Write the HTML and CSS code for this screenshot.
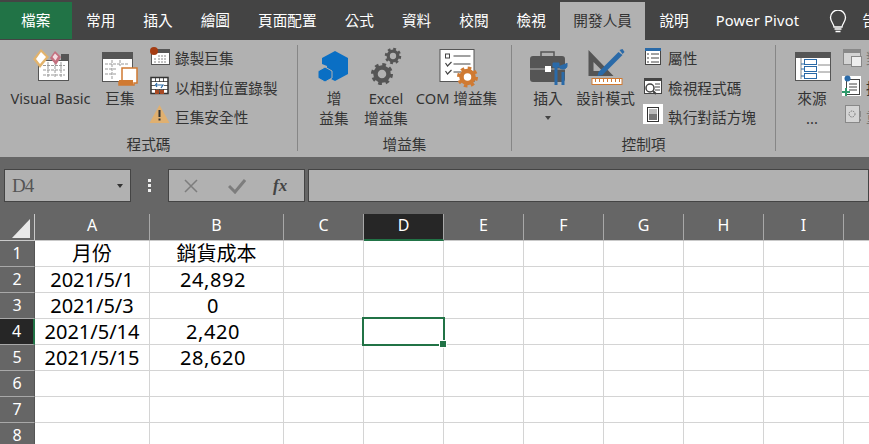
FILE: index.html
```html
<!DOCTYPE html>
<html lang="zh-Hant">
<head>
<meta charset="utf-8">
<title>Excel</title>
<link rel="stylesheet" href="styles.css">
</head>
<body>
<div class="app">
  <nav class="tabs">
    <div class="tab file">檔案</div>
    <div class="tab">常用</div>
    <div class="tab">插入</div>
    <div class="tab">繪圖</div>
    <div class="tab">頁面配置</div>
    <div class="tab">公式</div>
    <div class="tab">資料</div>
    <div class="tab">校閱</div>
    <div class="tab">檢視</div>
    <div class="tab active">開發人員</div>
    <div class="tab">說明</div>
    <div class="tab latin">Power Pivot</div>
    <svg class="bulb" viewBox="831 10 18 23" width="18" height="23"><path d="M836 27c0-3-3.500-5-3.500-9.500a7.500 7.500 0 0 1 15 0c0 4.500-3.500 6.500-3.500 9.500z" fill="none" stroke="#fff" stroke-width="1.300"/><path d="M836.500 29h7M837.500 31.500h5" stroke="#fff" stroke-width="1.300"/></svg>
    <div class="tell">告</div>
  </nav>

  <section class="ribbon">
    <div class="group g1">
      <div class="items">
        <div class="big w-vb">
          <svg class="ico" viewBox="10 42 81 46" width="81" height="46">
            <rect x="38.500" y="60.500" width="30" height="20" fill="#fff" stroke="#555"/><rect x="61" y="54" width="8" height="7" fill="#555"/>
            <path d="M43 65.500h22M43 70h22M43 75h22M48 62v16M55 62v16M61 62v16" stroke="#999" stroke-dasharray="3 1"/>
            <path d="M41 49l8 8-9 11-7-9z" fill="#e2b36c"/><path d="M41 52l5 5-6 7-4-5z" fill="#fff"/>
            <path d="M55 51l6 6-5 8-6-7z" fill="#c4707f"/><path d="M55 53.500l3 3-2.500 4-3-3.500z" fill="#f4dde2"/>
          </svg>
          <span>Visual Basic</span>
        </div>
        <div class="big w-macro">
          <svg class="ico" viewBox="100 42 40 46" width="40" height="46">
            <rect x="102.500" y="52.500" width="30" height="29" fill="#fff" stroke="#555"/><rect x="102" y="52" width="31" height="7" fill="#555"/>
            <path d="M105 64h24M105 69h12M105 74h12M112 60v19M120 60v6" stroke="#999" stroke-dasharray="3 1"/>
            <path d="M122 68h15v15h-3v2h-15v-3h3z" fill="#fff" stroke="#d07a32" stroke-width="1.500"/><rect x="119" y="80" width="14" height="5" fill="#d07a32"/>
          </svg>
          <span>巨集</span>
        </div>
        <div class="smalls s1">
          <div class="small">
            <svg class="ico" viewBox="150 47 20 20" width="20" height="20"><rect x="151.500" y="50.500" width="18" height="14" fill="#fff" stroke="#555"/><rect x="151" y="49" width="19" height="4" fill="#555"/><path d="M158 56h9M158 59h9M158 62h9M154 59h3M154 62h3" stroke="#888" stroke-dasharray="2 1"/><circle cx="154" cy="51" r="4" fill="#a53c12"/></svg>
            <span>錄製巨集</span>
          </div>
          <div class="small">
            <svg class="ico" viewBox="150 77 20 20" width="20" height="20"><rect x="151" y="77.500" width="17" height="16" fill="#fff" stroke="#333" stroke-width="1.500"/><path d="M151 81.500h17M151 85.500h17M151 89.500h17M155.500 78v16M159.500 78v16M163.500 78v16" stroke="#333" stroke-width=".8"/><rect x="155" y="82" width="9" height="7" fill="#fff"/><path d="M156 85h7l-2 3M157 83l-1.500 2 1.500 2" fill="none" stroke="#2a6aa8" stroke-width="1.200"/><rect x="155" y="90" width="4" height="4" fill="#a84a24"/><rect x="160" y="90" width="4" height="4" fill="#a84a24"/></svg>
            <span>以相對位置錄製</span>
          </div>
          <div class="small low">
            <svg class="ico" viewBox="150 107 20 20" width="20" height="20"><path d="M159.500 106l10 18h-20z" fill="#e0b070"/><path d="M158.500 111h2v7h-2zM158.500 119.500h2v2h-2z" fill="#333"/></svg>
            <span>巨集安全性</span>
          </div>
        </div>
      </div>
      <div class="glabel">程式碼</div>
    </div>
    <div class="sep"></div>

    <div class="group g2">
      <div class="items">
        <div class="big w-addin">
          <svg class="ico" viewBox="314 42 40 46" width="40" height="46"><path d="M335 51l13 7v16l-13 7-8-4V66l-5-2v-6z" fill="#0a6fc4"/><path d="M325 67l7 4v7l-7 4-7-4v-7z" fill="#0a6fc4" stroke="#b1b1b1"/></svg>
          <span>增<br>益集</span>
        </div>
        <div class="big w-excel">
          <svg class="ico" viewBox="366 42 40 46" width="40" height="46"><g fill="none" stroke="#555"><circle cx="382" cy="74" r="9.500" stroke-width="3" stroke-dasharray="3.700 3.760"/><circle cx="382" cy="74" r="6.500" stroke-width="4.500"/><circle cx="393" cy="56" r="7" stroke-width="2.500" stroke-dasharray="2.750 2.750"/><circle cx="393" cy="56" r="4.800" stroke-width="3.300"/></g></svg>
          <span>Excel<br>增益集</span>
        </div>
        <div class="big w-com">
          <svg class="ico" viewBox="436.500 42 40 46" width="40" height="46"><rect x="439.500" y="49.500" width="34" height="32" fill="#fff" stroke="#555"/><rect x="445" y="54" width="4" height="4" fill="none" stroke="#444"/><path d="M453 56h17M453 64h17M453 72h8M445 63l2 3 4-4M445 71l2 3 4-4" fill="none" stroke="#444" stroke-width="1.200"/><g fill="none" stroke="#d07a32"><circle cx="467" cy="77" r="9" stroke-width="3" stroke-dasharray="3.530 3.530"/><circle cx="467" cy="77" r="6" stroke-width="4.500"/></g></svg>
          <span>COM 增益集</span>
        </div>
      </div>
      <div class="glabel">增益集</div>
    </div>
    <div class="sep"></div>

    <div class="group g3">
      <div class="items">
        <div class="big w-insert">
          <svg class="ico" viewBox="528 42 40 46" width="40" height="46"><path d="M541 56v-4h13v4" fill="none" stroke="#555" stroke-width="1.500"/><rect x="530" y="56" width="35" height="26" rx="3" fill="#555"/><path d="M530 69h35" stroke="#b1b1b1"/><rect x="545" y="66" width="6" height="6" fill="#fff"/><path d="M556 67v18M563 72v13" stroke="#2a6aa8" stroke-width="3"/><path d="M553 67h6v-4h-6zM559 66c0 4 8 4 8 0v-3" fill="#2a6aa8" stroke="#2a6aa8"/></svg>
          <span>插入</span>
          <i class="caret"></i>
        </div>
        <div class="big w-design">
          <svg class="ico" viewBox="585.500 42 40 46" width="40" height="46"><path d="M588 50l25 26h-25zM593 62v9h9z" fill="#555" fill-rule="evenodd"/><path d="M598 72l20-20 4 3-20 20-5 1z" fill="#2a6aa8"/><path d="M619 50l3-1 2 3-2 2z" fill="#2a6aa8"/><rect x="591.500" y="78.500" width="30" height="6" fill="#fff" stroke="#d07a32"/><path d="M595 79v3M599 79v3M603 79v3M607 79v3M611 79v3M615 79v3M619 79v3" stroke="#d07a32"/></svg>
          <span>設計模式</span>
        </div>
        <div class="smalls s3">
          <div class="small">
            <svg class="ico" viewBox="643 47 20 20" width="20" height="20"><rect x="645.500" y="48.500" width="15" height="16" fill="#fff" stroke="#444"/><rect x="645" y="48" width="16" height="3" fill="#2a6aa8"/><path d="M651 54h8M651 58h8M651 62h8M647 54h2M647 58h2M647 62h2" stroke="#444"/></svg>
            <span>屬性</span>
          </div>
          <div class="small">
            <svg class="ico" viewBox="643 77 20 20" width="20" height="20"><rect x="644.500" y="78.500" width="17" height="15" fill="#fff" stroke="#444"/><rect x="644" y="78" width="18" height="3" fill="#444"/><path d="M655 84h5M655 87h5M655 90h5" stroke="#444"/><circle cx="650" cy="88" r="4" fill="#fff" stroke="#444" stroke-width="1.500"/><path d="M653 91l3 3" stroke="#444" stroke-width="2"/></svg>
            <span>檢視程式碼</span>
          </div>
          <div class="small low">
            <svg class="ico" viewBox="643 107 20 20" width="20" height="20"><rect x="643" y="105" width="20" height="20" fill="#fff"/><rect x="647.500" y="108.500" width="11" height="14" fill="#fff" stroke="#333"/><path d="M649 110h8v5h-8z" fill="#bbb"/><path d="M649 115h8v6h-8z" fill="#777"/></svg>
            <span>執行對話方塊</span>
          </div>
        </div>
      </div>
      <div class="glabel">控制項</div>
    </div>
    <div class="sep"></div>

    <div class="group g4">
      <div class="items">
        <div class="big w-source">
          <svg class="ico" viewBox="792 42 40 46" width="40" height="46"><rect x="795.500" y="52.500" width="35" height="28" fill="#fff" stroke="#555"/><rect x="795" y="52" width="36" height="6" fill="#555"/><path d="M801 58v21M818 65h12M818 72h12" stroke="#888"/><path d="M801 64h4M801 69h4M801 76h4" stroke="#2a6aa8"/><rect x="804.500" y="59.500" width="12" height="5" fill="#fff" stroke="#2a6aa8"/><rect x="804.500" y="66.500" width="12" height="5" fill="#fff" stroke="#2a6aa8"/><rect x="804.500" y="73.500" width="12" height="5" fill="#fff" stroke="#2a6aa8"/></svg>
          <span>來源<br>...</span>
        </div>
        <div class="smalls s4">
          <div class="small off">
            <svg class="ico" viewBox="843 47 20 20" width="20" height="20"><rect x="843.500" y="49.500" width="17" height="15" fill="#d4d4d4" stroke="#888"/><rect x="843" y="49" width="18" height="4" fill="#888"/><rect x="851.500" y="56.500" width="10" height="10" fill="#eee" stroke="#888"/></svg>
            <span>對應</span>
          </div>
          <div class="small">
            <svg class="ico" viewBox="843 77 20 20" width="20" height="20"><rect x="842" y="76" width="19" height="20" fill="#fff"/><rect x="846.500" y="79.500" width="13" height="15" fill="#fff" stroke="#444"/><circle cx="847.500" cy="78.500" r="3" fill="#2a6aa8"/><path d="M849 84h8M849 87h8M849 90h8" stroke="#444"/><path d="M846 88v8M842 92h8" stroke="#2f9a6c" stroke-width="2"/></svg>
            <span>擴充</span>
          </div>
          <div class="small low off">
            <svg class="ico" viewBox="843 107 20 20" width="20" height="20"><rect x="845.500" y="106.500" width="14" height="17" fill="#d4d4d4" stroke="#888"/><circle cx="852" cy="115" r="3" fill="none" stroke="#777" stroke-dasharray="1.500 1"/><path d="M859 112h2v6h-2zM859 120h2v2h-2z" fill="#888"/></svg>
            <span>重新</span>
          </div>
        </div>
      </div>
    </div>
  </section>

  <section class="formula">
    <div class="namebox"><span>D4</span><i class="caret dark"></i></div>
    <div class="dots"><b></b><b></b><b></b></div>
    <div class="fxbox">
      <svg viewBox="0 0 16 16" width="16" height="16"><path d="M2 2l12 12M14 2L2 14" stroke="#7d7d7d" stroke-width="1.500"/></svg>
      <svg viewBox="0 0 18 16" width="18" height="16"><path d="M1 8l6 6L17 2" fill="none" stroke="#7d7d7d" stroke-width="3"/></svg>
      <span class="fx">fx</span>
    </div>
    <div class="input"></div>
  </section>

  <section class="sheet">
    <div class="corner"><svg viewBox="0 0 20 20" width="20" height="20"><path d="M19 1v19H1z" fill="#e9e9e9"/></svg></div>
    <div class="ch">A</div><div class="ch">B</div><div class="ch">C</div><div class="ch sel">D</div><div class="ch">E</div><div class="ch">F</div><div class="ch">G</div><div class="ch">H</div><div class="ch">I</div><div class="ch"></div>

    <div class="rh">1</div><div class="c">月份</div><div class="c">銷貨成本</div><div class="c"></div><div class="c"></div><div class="c"></div><div class="c"></div><div class="c"></div><div class="c"></div><div class="c"></div><div class="c"></div>
    <div class="rh">2</div><div class="c">2021/5/1</div><div class="c num">24,892</div><div class="c"></div><div class="c"></div><div class="c"></div><div class="c"></div><div class="c"></div><div class="c"></div><div class="c"></div><div class="c"></div>
    <div class="rh">3</div><div class="c">2021/5/3</div><div class="c num">0</div><div class="c"></div><div class="c"></div><div class="c"></div><div class="c"></div><div class="c"></div><div class="c"></div><div class="c"></div><div class="c"></div>
    <div class="rh sel">4</div><div class="c">2021/5/14</div><div class="c num">2,420</div><div class="c"></div><div class="c active-cell"><i class="handle"></i></div><div class="c"></div><div class="c"></div><div class="c"></div><div class="c"></div><div class="c"></div><div class="c"></div>
    <div class="rh">5</div><div class="c">2021/5/15</div><div class="c num">28,620</div><div class="c"></div><div class="c"></div><div class="c"></div><div class="c"></div><div class="c"></div><div class="c"></div><div class="c"></div><div class="c"></div>
    <div class="rh">6</div><div class="c"></div><div class="c"></div><div class="c"></div><div class="c"></div><div class="c"></div><div class="c"></div><div class="c"></div><div class="c"></div><div class="c"></div><div class="c"></div>
    <div class="rh">7</div><div class="c"></div><div class="c"></div><div class="c"></div><div class="c"></div><div class="c"></div><div class="c"></div><div class="c"></div><div class="c"></div><div class="c"></div><div class="c"></div>
    <div class="rh">8</div><div class="c"></div><div class="c"></div><div class="c"></div><div class="c"></div><div class="c"></div><div class="c"></div><div class="c"></div><div class="c"></div><div class="c"></div><div class="c"></div>
  </section>
</div>
</body>
</html>
```

FILE: styles.css
```css
* { box-sizing: border-box; }
html, body { margin: 0; height: 100%; overflow: hidden; }
body { background: #fff; font-family: "Noto Sans", "Noto Sans CJK TC", sans-serif; }
.app { width: 869px; height: 444px; overflow: hidden; display: flex; flex-direction: column; }

.tabs { height: 40px; flex: none; background: #444; display: flex; padding-top: 2px; color: #fff; font-size: 14.67px; }
.tab { flex: none; padding: 0 14px; height: 38px; line-height: 37px; white-space: nowrap; }
.tab.file { width: 72px; padding: 0 0 0 21px; height: 37px; background: #217346; }
.tab.active { width: 85.500px; padding: 0; text-align: center; background: #b1b1b1; color: #333; }
.tab.latin { letter-spacing: .2px; margin-left: -1px; }
.bulb { margin: 8px 0 0 16px; flex: none; }
.tell { flex: none; margin-left: 15px; line-height: 37px; white-space: nowrap; }

.ribbon { height: 117px; flex: none; background: #b1b1b1; display: flex; color: #333; font-size: 14.67px; }
.group { padding-top: 2px; display: flex; flex-direction: column; flex: none; }
.g1 { width: 297px; }
.g2 { width: 213px; }
.g3 { width: 263px; }
.g4 { flex: 1; }
.g1 .items { padding-left: 10px; }
.g2 .items { padding-left: 22px; }
.g3 .items { padding-left: 20px; }
.g4 .items { padding-left: 18px; }
.sep { width: 1px; margin: 5px 0 6px; background: #868686; flex: none; }
.items { display: flex; }
.glabel { margin-top: auto; height: 23px; line-height: 20px; text-align: center; white-space: nowrap; }
.big { display: flex; flex-direction: column; align-items: center; text-align: center; line-height: 20px; white-space: nowrap; flex: none; }
.ico { flex: none; overflow: visible; display: block; }
.w-vb { width: 81px; }
.w-macro { width: 30px; margin-left: 14px; }
.s1 { margin-left: 15px; }
.w-addin { width: 28px; }
.w-excel { width: 44px; margin-left: 16px; }
.w-com { width: 85px; margin-left: 6px; }
.w-insert { width: 32px; }
.w-design { width: 61px; margin-left: 11px; }
.s3 { margin-left: 7px; }
.w-source { width: 36px; }
.s4 { margin-left: 13px; }
.s4 .small { gap: 3px; }
.smalls { display: flex; flex-direction: column; flex: none; }
.small { height: 30px; display: flex; align-items: center; gap: 5px; white-space: nowrap; }
.small.low { height: 28px; }
.small.off { color: #777; }
.caret { width: 0; height: 0; border: 3.500px solid transparent; border-top: 4px solid #444; border-bottom: 0; margin-top: 8px; }

.formula { height: 57px; flex: none; background: #666; display: flex; padding: 12px 0 12px 4px; }
.namebox { width: 127px; background: #b1b1b1; border: 1px solid #444; display: flex; align-items: center; justify-content: space-between; padding: 0 7px 0 7px; font: 19px "Liberation Serif", serif; letter-spacing: -1px; color: #555; }
.caret.dark { margin: 0; border-top-color: #333; }
.dots { width: 37px; display: flex; flex-direction: column; align-items: center; justify-content: center; gap: 2px; }
.dots b { width: 3px; height: 3px; background: #eee; }
.fxbox { width: 137px; background: #b1b1b1; border: 1px solid #444; display: flex; align-items: center; padding-left: 14px; }
.fxbox svg:nth-child(2) { margin-left: 29px; }
.fx { margin-left: 27px; font: italic bold 17px "Liberation Serif", serif; color: #444; }
.input { flex: 1; margin-left: 3px; background: #b1b1b1; border: 1px solid #444; }

.sheet { flex: 1; display: grid; grid-template-columns: 35px 115px 134px repeat(7, 80px) 80px; grid-template-rows: 27px repeat(8, 26px); background: #fff; }
.corner { background: #666; border-right: 1px solid #c9c9c9; border-bottom: 1px solid #c9c9c9; display: flex; align-items: flex-end; justify-content: flex-end; padding: 0 3px 2px 0; }
.ch { background: #666; color: #fff; font-size: 16px; line-height: 23px; text-align: center; border-right: 1px solid #a8a8a8; border-bottom: 1px solid #c9c9c9; }
.ch.sel { background: #262626; border-bottom: 2px solid #217346; }
.rh { background: #666; color: #fff; font-size: 16px; line-height: 25px; text-align: center; border-bottom: 1px solid #a8a8a8; border-right: 1px solid #555; }
.rh.sel { background: #262626; border-right: 2px solid #217346; }
.c { border-right: 1px solid #d4d4d4; border-bottom: 1px solid #d4d4d4; color: #000; font-size: 20px; line-height: 25px; text-align: center; white-space: nowrap; }
.c.num { padding-right: 7px; letter-spacing: .6px; }
.active-cell { position: relative; }
.active-cell::after { content: ""; box-sizing: border-box; position: absolute; left: -2px; top: -2px; width: 83px; height: 29px; border: 2px solid #217346; }
.handle { position: absolute; right: -3px; bottom: -3px; width: 6px; height: 6px; background: #217346; z-index: 1; outline: 1px solid #fff; }
```
